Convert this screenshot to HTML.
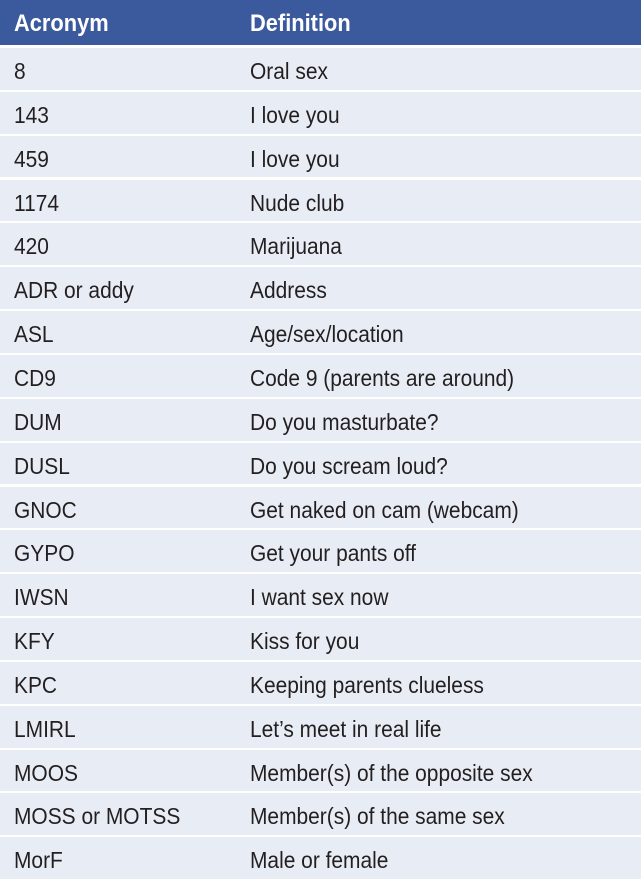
<!DOCTYPE html><html><head><style>
body{margin:0;width:641px;height:881px;overflow:hidden;background:#fff;font-family:"Liberation Sans Narrow","Liberation Sans",sans-serif;}
.h{position:absolute;left:0;top:0;width:641px;height:45px;background:#3b5a9d;color:#fff;font-weight:bold;}
.r{position:absolute;left:0;width:641px;height:41.8px;background:#e8edf5;color:#231f20;}
span{position:absolute;font-size:23px;white-space:nowrap;transform:scaleX(0.91);transform-origin:0 50%;}
.h span{top:10px;font-size:24px}
.r span{top:10px}
.a{left:14px}.d{left:250px}
</style></head><body>
<div class="h"><span class="a">Acronym</span><span class="d">Definition</span></div>
<div id="rows"></div>
<script>
var d=[["8","Oral sex"],["143","I love you"],["459","I love you"],["1174","Nude club"],["420","Marijuana"],["ADR or addy","Address"],["ASL","Age/sex/location"],["CD9","Code 9 (parents are around)"],["DUM","Do you masturbate?"],["DUSL","Do you scream loud?"],["GNOC","Get naked on cam (webcam)"],["GYPO","Get your pants off"],["IWSN","I want sex now"],["KFY","Kiss for you"],["KPC","Keeping parents clueless"],["LMIRL","Let’s meet in real life"],["MOOS","Member(s) of the opposite sex"],["MOSS or MOTSS","Member(s) of the same sex"],["MorF","Male or female"]];
var h="";for(var i=0;i<d.length;i++){h+='<div class="r" style="top:'+(48+i*43.85)+'px"><span class="a">'+d[i][0]+'</span><span class="d">'+d[i][1]+'</span></div>';}
document.getElementById("rows").innerHTML=h;
</script>
</body></html>
